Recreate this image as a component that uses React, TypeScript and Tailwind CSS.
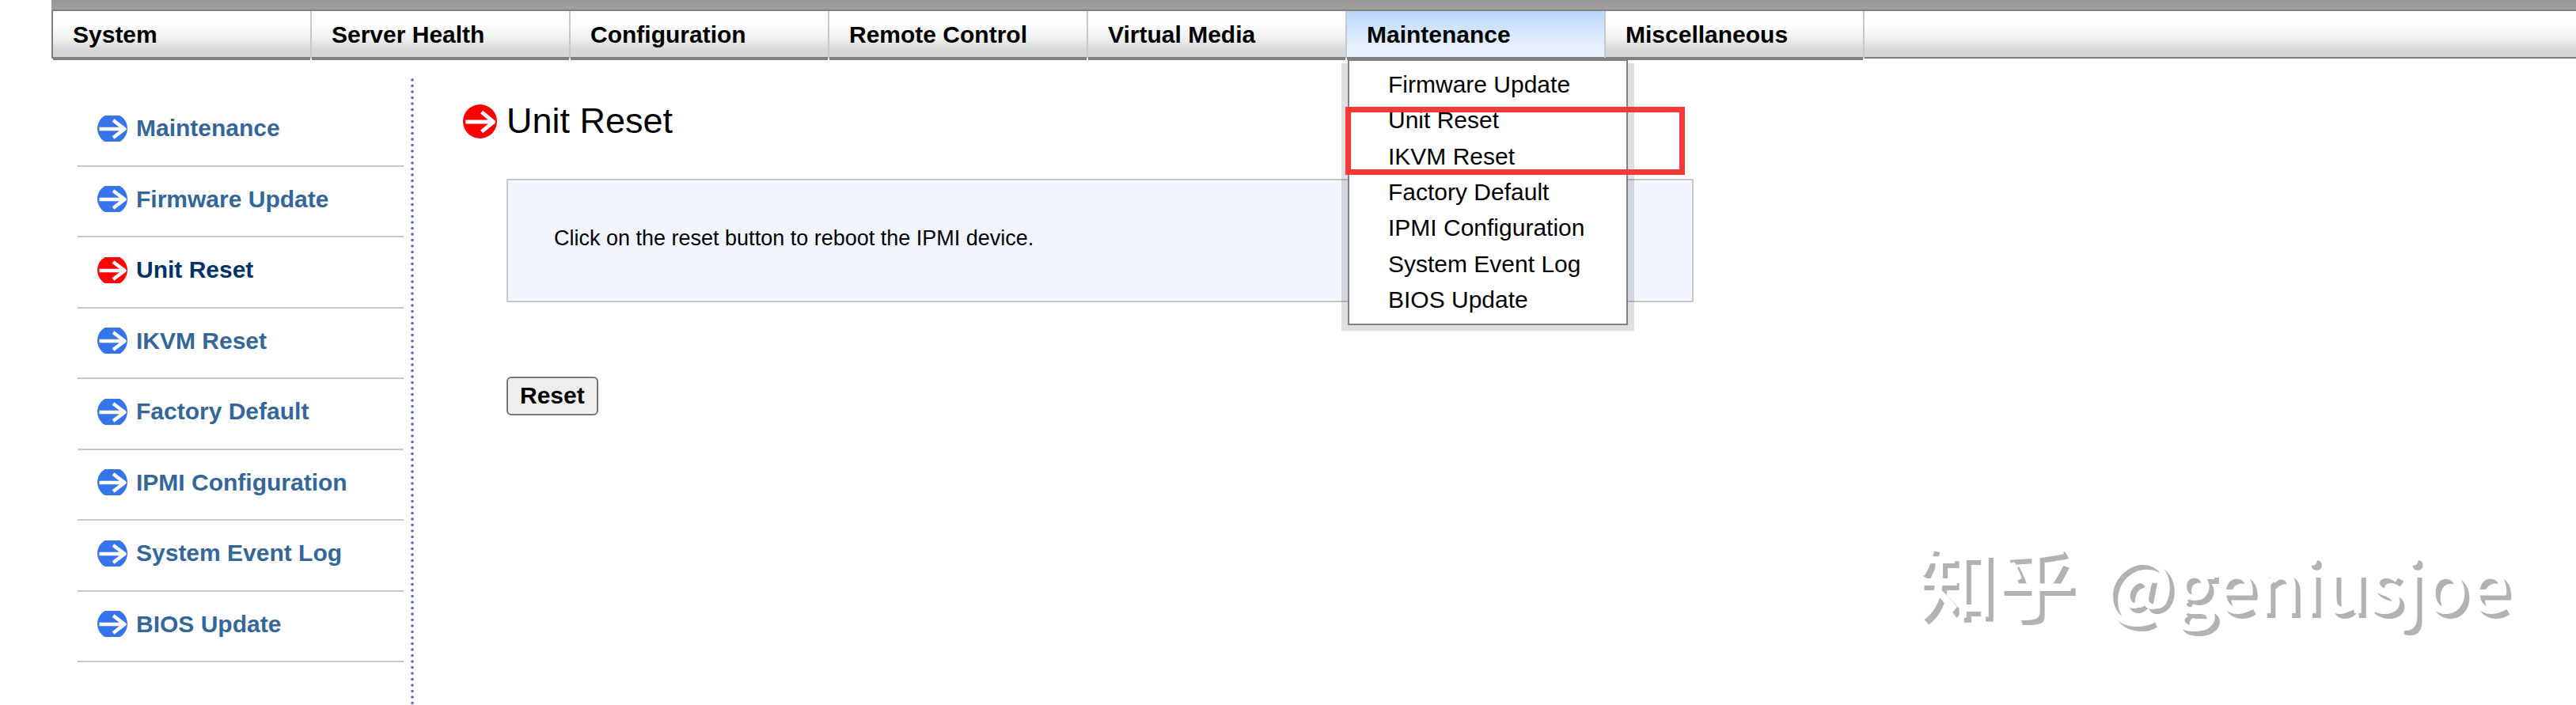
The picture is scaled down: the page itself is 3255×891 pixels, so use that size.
const navItems = [
  "System",
  "Server Health",
  "Configuration",
  "Remote Control",
  "Virtual Media",
  "Maintenance",
  "Miscellaneous",
]

const menuItems = [
  "Firmware Update",
  "Unit Reset",
  "IKVM Reset",
  "Factory Default",
  "IPMI Configuration",
  "System Event Log",
  "BIOS Update",
]

const sideItems = ["Maintenance", ...menuItems]

function ArrowIcon({ className }: { className: string }) {
  return (
    <svg viewBox="0 0 40 40" aria-hidden="true" className={className}>
      <circle cx="20" cy="20" r="20" fill="currentColor" />
      <path
        d="M3 20.500H35M22 9L36 20.500L22 32"
        fill="none"
        stroke="white"
        strokeWidth="4.500"
        strokeLinejoin="round"
      />
    </svg>
  )
}

// list icons lose the top and bottom of the disc
function ListIcon({ active }: { active: boolean }) {
  return (
    <svg
      viewBox="0 3 38 33"
      aria-hidden="true"
      className={active ? "h-[33px] w-[38px] text-[#fa0808]" : "h-[33px] w-[38px] text-[#3574ea]"}
    >
      <circle cx="19" cy="19.500" r="19" fill="currentColor" />
      <path
        d="M2.500 20H33M20 9L34.500 20L20 31"
        fill="none"
        stroke="white"
        strokeWidth="4.500"
        strokeLinejoin="round"
      />
    </svg>
  )
}

function Dropdown() {
  return (
    <div className="absolute top-[59px] -left-[7px] z-10 px-2 pb-[7px]">
      <div className="absolute inset-x-0 top-[7px] bottom-0 bg-black/12" />
      <ul className="relative grid h-[338px] w-[354px] auto-rows-fr border-2 border-t-4 border-[#808080] bg-white py-[7px] pl-[49px] font-normal">
        {menuItems.map((item) => (
          <li key={item} className="flex items-center">
            <a href="#" className="whitespace-nowrap">
              {item}
            </a>
          </li>
        ))}
      </ul>
      <div className="absolute top-[62px] left-[5px] h-[86px] w-[429px] border-7 border-[#fa3837]" />
    </div>
  )
}

function NavBar() {
  return (
    <nav className="border-l-2 border-[#808080]">
      <ul className="flex h-[60px] border-b-2 border-[#808080] bg-linear-to-b from-white from-25% via-[#eff0f0] via-60% to-[#d6d6d6] to-85% text-[30px] leading-[34px] font-bold">
        {navItems.map((item) => {
          const open = item === "Maintenance"
          return (
            <li
              key={item}
              className={
                open
                  ? "relative h-[60px] w-[327px] border-r-2 border-[#c8c8c8] bg-linear-to-b from-[#b9d7fd] to-[#e8f1ff] to-75%"
                  : "relative h-[60px] w-[327px] border-r-2 border-[#c8c8c8]"
              }
            >
              <a href="#" className="block h-[62px] border-b-4 border-[#808080] px-[25px] pt-[13px]">
                {item}
              </a>
              {open && <Dropdown />}
            </li>
          )
        })}
      </ul>
    </nav>
  )
}

function Sidebar() {
  return (
    <aside className="flex min-h-[792px] gap-[9px]">
      <ul className="mt-[22px] grid h-[716px] w-[412px] grid-rows-8 text-[30px] leading-[34px] font-bold">
        {sideItems.map((item) => {
          const active = item === "Unit Reset"
          return (
            <li key={item} className="border-b-2 border-[#c8c8c8] pt-6 pl-[25px]">
              <a
                href="#"
                className={
                  active
                    ? "flex items-center gap-[11px] text-[#003366]"
                    : "flex items-center gap-[11px] text-[#336699]"
                }
              >
                <ListIcon active={active} />
                {item}
              </a>
            </li>
          )
        })}
      </ul>
      <svg aria-hidden="true" className="h-[792px] w-1">
        <line
          x1="2"
          y1="2"
          x2="2"
          y2="792"
          stroke="#5560d8"
          strokeWidth="3.600"
          strokeLinecap="round"
          strokeDasharray="0 7.500"
        />
      </svg>
    </aside>
  )
}

export default function App() {
  return (
    <div className="relative min-h-screen overflow-hidden bg-white pl-[65px] font-['Liberation_Sans',Arial,sans-serif] text-black">
      <div className="h-[14px] border-b-2 border-[#808080] bg-linear-to-b from-[#969696] to-[#a0a0a0]" />
      <NavBar />
      <div className="mt-[25px] flex pl-[33px]">
        <Sidebar />
        <main className="ml-[62px] w-[1555px] pt-8">
          <h1 className="flex items-center gap-3 text-[45px] leading-[44px]">
            <ArrowIcon className="h-[43px] w-[43px] text-[#fe0000]" />
            Unit Reset
          </h1>
          <div className="ml-[55px]">
            <p className="mt-[51px] border-2 border-[#c8c8c8] bg-[#f0f5ff] px-[58px] pt-[57px] pb-[63px] text-[27px] leading-8">
              Click on the reset button to reboot the IPMI device.
            </p>
            <button
              type="button"
              className="mt-[94px] h-[49px] rounded-md border-2 border-[#767676] bg-[#efefef] px-[15px] pb-0.5 text-[30px] leading-[34px] font-bold"
            >
              Reset
            </button>
          </div>
        </main>
      </div>
      <p className="absolute right-[84px] bottom-24 flex items-baseline gap-9 font-['Noto_Sans_CJK_SC',sans-serif] leading-[120px] font-medium whitespace-nowrap text-white [text-shadow:6px_6px_0_#b2b2b2]">
        <span className="text-[100px]">知乎</span>
        <span className="text-[92px]">@geniusjoe</span>
      </p>
    </div>
  )
}
